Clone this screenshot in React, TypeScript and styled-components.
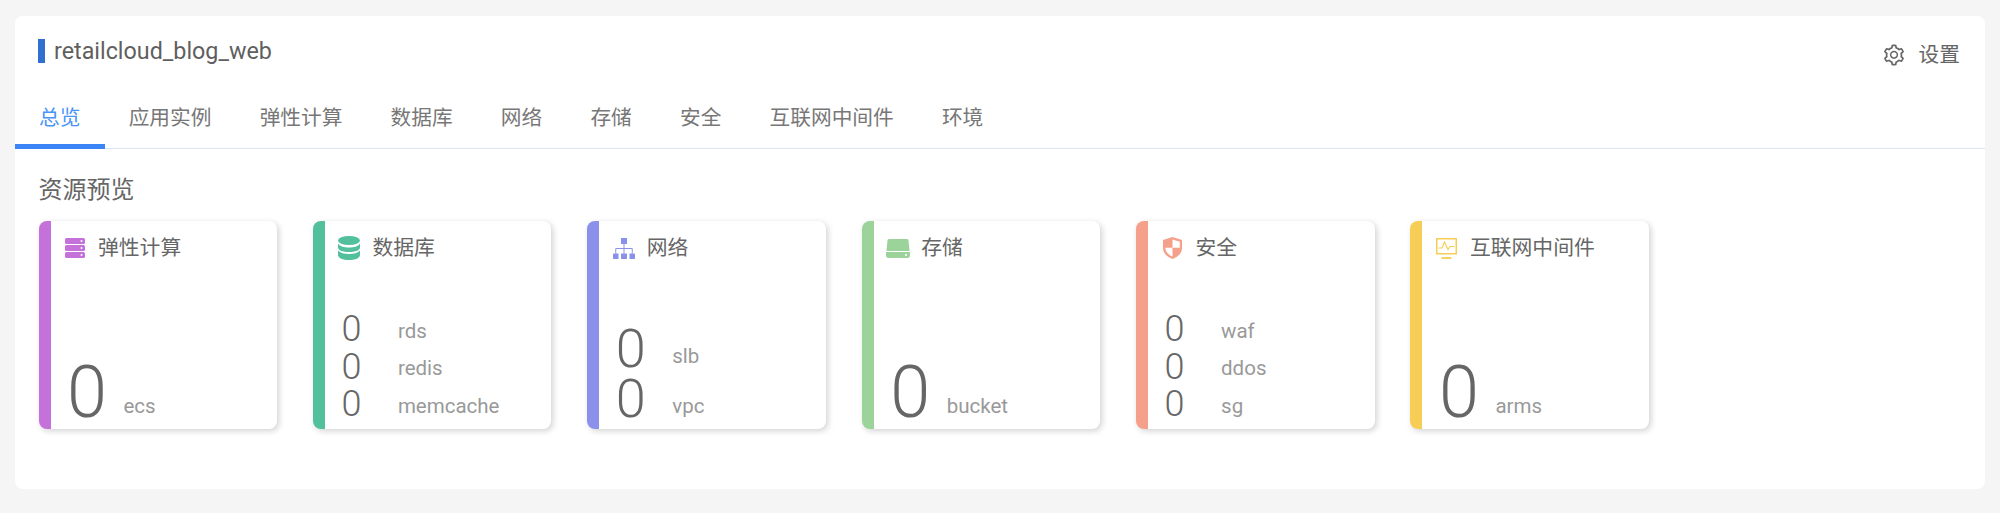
import React from "react";
import styled, { createGlobalStyle } from "styled-components";
import { AiOutlineSetting } from "react-icons/ai";

const Global = createGlobalStyle`
  html, body { margin: 0; padding: 0; background: #f5f5f5; }
  body { font-family: Roboto, "Noto Sans CJK SC", sans-serif; color: #666; }
`;

const Page = styled.div`
  padding: 16px 15px 24px;
  background: #f5f5f5;
  min-height: 513px;
  box-sizing: border-box;
`;

const Panel = styled.main`
  height: 473px;
  background: #fff;
  border-radius: 8px;
  box-sizing: border-box;
`;

const Header = styled.header`
  display: flex;
  justify-content: space-between;
  align-items: flex-start;
  padding: 23px 25px 0 23px;
  height: 80px;
  box-sizing: border-box;
`;

const AppTitle = styled.h1`
  margin: 0;
  height: 24px;
  padding-left: 9px;
  border-left: 7px solid #2f6fd0;
  font-size: 23.3px;
  font-weight: 400;
  line-height: 25px;
  color: #5f5f5f;
`;

const SettingsButton = styled.div`
  display: flex;
  align-items: center;
  gap: 13px;
  margin-top: 4px;
  height: 24px;
  font-size: 20.7px;
  line-height: 24px;
  color: #666;
`;

const Tabs = styled.nav`
  display: flex;
  height: 52px;
  border-bottom: 1px solid #dfe5f6;
`;

const Tab = styled.div<{ $active?: boolean }>`
  padding: 0 24.1px;
  height: 53px;
  box-sizing: border-box;
  font-size: 20.7px;
  line-height: 44px;
  color: ${(p) => (p.$active ? "#4a94f8" : "#777")};
  border-bottom: 5px solid ${(p) => (p.$active ? "#3b86f6" : "transparent")};
`;

const Content = styled.section`
  padding: 0 0 0 23.5px;
`;

const SectionTitle = styled.h2`
  margin: 0;
  height: 50px;
  font-size: 24px;
  font-weight: 400;
  line-height: 38px;
  padding-top: 22px;
  color: #666;
`;

const CardRow = styled.div`
  display: flex;
  gap: 35.9px;
`;

const Card = styled.article<{ $color: string }>`
  width: 238.5px;
  height: 208px;
  box-sizing: border-box;
  display: flex;
  flex-direction: column;
  background: #fff;
  border-left: 12px solid ${(p) => p.$color};
  border-radius: 8px;
  box-shadow: 2px 2px 6px rgba(0, 0, 0, 0.18);
  padding: 15px 0 5.5px 16.5px;
`;

const CardHead = styled.div`
  display: flex;
  align-items: center;
  height: 24px;
  margin-left: -4px;
  font-size: 20.8px;
  line-height: 24px;
  color: #666;
`;

const IconSlot = styled.span`
  display: flex;
  justify-content: center;
  width: 24px;
  margin-right: 11px;
`;

const Rows = styled.div`
  margin-top: auto;
  display: flex;
  flex-direction: column;
`;

const Row = styled.div`
  display: grid;
  grid-template-columns: 56.5px 1fr;
  align-items: end;
`;

const Num = styled.span<{ $size: number; $lh: number }>`
  font-size: ${(p) => p.$size}px;
  line-height: ${(p) => p.$lh}px;
  font-weight: 300;
  color: #666;
`;

const Label = styled.span`
  font-size: 20.5px;
  line-height: 35px;
  color: #999;
`;

const ServerIcon = ({ c }: { c: string }) => (
  <svg width="20" height="20" viewBox="0 0 20 20">
    {[0, 7, 14].map((y) => (
      <g key={y}>
        <rect x="0" y={y} width="20" height="6" rx="1.5" fill={c} />
        <circle cx="16.5" cy={y + 3} r="1" fill="#fff" />
      </g>
    ))}
  </svg>
);

const DbIcon = ({ c }: { c: string }) => (
  <svg width="22" height="24" viewBox="0 0 22 24">
    <ellipse cx="11" cy="4.5" rx="11" ry="4.5" fill={c} />
    <path d="M0 7.5C2 10.5 6 11.5 11 11.5S20 10.5 22 7.5V11.5C22 14.5 17 16 11 16S0 14.5 0 11.5Z" fill={c} />
    <path d="M0 14.5C2 17 6 18 11 18S20 17 22 14.5V19C22 22 17 24 11 24S0 22 0 19Z" fill={c} />
  </svg>
);

const NetIcon = ({ c }: { c: string }) => (
  <svg width="22" height="21" viewBox="0 0 22 21">
    <rect x="8" y="0" width="6" height="6" fill={c} />
    <rect x="0" y="15.5" width="5.5" height="5.5" fill={c} />
    <rect x="8" y="15.5" width="6" height="5.5" fill={c} />
    <rect x="16.5" y="15.5" width="5.5" height="5.5" fill={c} />
    <path d="M11 6V15.5M2.75 15.5V10.5H19.25V15.5" fill="none" stroke={c} strokeWidth="1" />
  </svg>
);

const DiskIcon = ({ c }: { c: string }) => (
  <svg width="24" height="19" viewBox="0 0 24 19">
    <path d="M1.5 1.500C1.600 .5 2.300 0 3.300 0H20.700C21.700 0 22.400 .5 22.500 1.500L23.600 12H.4Z" fill={c} />
    <path d="M0 13H24V16.5C24 18 23 19 21.5 19H2.5C1 19 0 18 0 16.5Z" fill={c} />
    <circle cx="20" cy="16" r="1.1" fill="#fff" />
  </svg>
);

const ShieldIcon = ({ c }: { c: string }) => (
  <svg width="19" height="22" viewBox="0 0 19 22">
    <path d="M9.5 0L19 3V11C19 16.5 14.5 20 9.5 22C4.500 20 0 16.500 0 11V3Z" fill={c} />
    <path d="M9.5 2.600L16.800 4.800V10.800H9.500Z" fill="#fff" />
    <path d="M2.200 10.800H9.500V19.500C5.500 17.800 2.500 15 2.200 10.800Z" fill="#fff" />
  </svg>
);

const MonitorIcon = ({ c }: { c: string }) => (
  <svg width="21" height="21" viewBox="0 0 21 21" fill="none" stroke={c}>
    <rect x=".75" y=".75" width="19.500" height="15" strokeWidth="1.500" />
    <path d="M2.500 10H6L8.500 4L12 11.500L14 8.500H18.500" strokeWidth="1.200" />
    <path d="M5.500 20H15.500" strokeWidth="1.800" />
  </svg>
);

const tabs = ["总览", "应用实例", "弹性计算", "数据库", "网络", "存储", "安全", "互联网中间件", "环境"];

const sizes: Record<number, { s: number; lh: number }> = {
  1: { s: 72, lh: 62 },
  2: { s: 54, lh: 50 },
  3: { s: 36, lh: 37.5 },
};

const cards = [
  { title: "弹性计算", color: "#c471d9", Icon: ServerIcon, items: ["ecs"] },
  { title: "数据库", color: "#52c09d", Icon: DbIcon, items: ["rds", "redis", "memcache"] },
  { title: "网络", color: "#8b91ea", Icon: NetIcon, items: ["slb", "vpc"] },
  { title: "存储", color: "#9cd39b", Icon: DiskIcon, items: ["bucket"] },
  { title: "安全", color: "#f5a08a", Icon: ShieldIcon, items: ["waf", "ddos", "sg"] },
  { title: "互联网中间件", color: "#f7ce55", Icon: MonitorIcon, items: ["arms"] },
];

export default function App() {
  return (
    <Page>
      <Global />
      <Panel>
        <Header>
          <AppTitle>retailcloud_blog_web</AppTitle>
          <SettingsButton>
            <AiOutlineSetting size={24} color="#666" />
            设置
          </SettingsButton>
        </Header>
        <Tabs>
          {tabs.map((t, i) => (
            <Tab key={t} $active={i === 0}>
              {t}
            </Tab>
          ))}
        </Tabs>
        <Content>
          <SectionTitle>资源预览</SectionTitle>
          <CardRow>
            {cards.map(({ title, color, Icon, items }) => (
              <Card key={title} $color={color}>
                <CardHead>
                  <IconSlot>
                    <Icon c={color} />
                  </IconSlot>
                  {title}
                </CardHead>
                <Rows>
                  {items.map((it) => (
                    <Row key={it}>
                      <Num $size={sizes[items.length].s} $lh={sizes[items.length].lh}>
                        0
                      </Num>
                      <Label>{it}</Label>
                    </Row>
                  ))}
                </Rows>
              </Card>
            ))}
          </CardRow>
        </Content>
      </Panel>
    </Page>
  );
}
